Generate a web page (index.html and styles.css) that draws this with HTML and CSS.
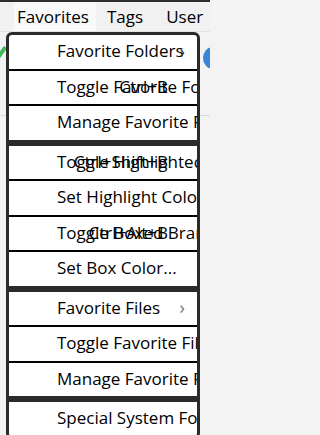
FILE: index.html
```html
<!DOCTYPE html>
<html>
<head>
<meta charset="utf-8">
<link rel="stylesheet" href="styles.css">
</head>
<body>
<div class="screen">
  <div class="topstrip"></div>
  <div class="menubar">
    <div class="mb-item mb-active">Favorites</div>
    <div class="mb-item mb-tags">Tags</div>
    <div class="mb-item mb-user">User</div>
  </div>
  <div class="content">
    <div class="green-mark"></div>
    <div class="blue-mark"></div>
    <div class="rule rule-1"></div>
  </div>

  <div class="popup">
    <div class="item"><span class="label">Favorite Folders</span><span class="arrow dark">&#8250;</span></div>
    <div class="sep"></div>
    <div class="item"><span class="label">Toggle Favorite Folder</span><span class="shortcut">Ctrl+B</span></div>
    <div class="sep"></div>
    <div class="item"><span class="label">Manage Favorite Folders</span></div>
    <div class="group-sep"></div>
    <div class="item"><span class="label">Toggle Highlighted</span><span class="shortcut">Ctrl+Shift+B</span></div>
    <div class="sep"></div>
    <div class="item"><span class="label">Set Highlight Color...</span></div>
    <div class="sep"></div>
    <div class="item"><span class="label">Toggle Boxed Branch</span><span class="shortcut">Ctrl+Alt+B</span></div>
    <div class="sep"></div>
    <div class="item"><span class="label">Set Box Color...</span></div>
    <div class="group-sep"></div>
    <div class="item"><span class="label">Favorite Files</span><span class="arrow">&#8250;</span></div>
    <div class="sep"></div>
    <div class="item"><span class="label">Toggle Favorite File</span></div>
    <div class="sep"></div>
    <div class="item"><span class="label">Manage Favorite Files</span></div>
    <div class="group-sep"></div>
    <div class="item"><span class="label">Special System Folders</span></div>
  </div>
</div>
</body>
</html>
```

FILE: styles.css
```css
html, body {
  margin: 0;
  padding: 0;
}
body {
  width: 210px;
  height: 435px;
  overflow: hidden;
  background: #f3f3f3;
  font-family: "Open Sans", "Noto Sans", "DejaVu Sans", sans-serif;
  font-size: 17px;
  color: #000;
}
.screen {
  position: relative;
  width: 210px;
  height: 435px;
  overflow: hidden;
}
.topstrip {
  height: 2px;
  background: #2d2d2d;
}
.menubar {
  height: 29px;
  display: flex;
  align-items: center;
  background: #f1f1f1;
  border-bottom: 1px solid #e2e2e2;
}
.mb-item {
  height: 29px;
  line-height: 29px;
  white-space: nowrap;
}
.mb-active {
  margin-left: 14px;
  padding: 0 12px 0 3px;
  width: 67px;
  background: #f9f9f9;
}
.mb-tags {
  margin-left: 11px;
}
.mb-user {
  margin-left: 23px;
}
.content {
  position: relative;
  height: 403px;
}
.green-mark {
  position: absolute;
  left: -4px;
  top: 18px;
  width: 12px;
  height: 4px;
  background: #3dbb5a;
  transform: rotate(-55deg);
}
.blue-mark {
  position: absolute;
  left: 203px;
  top: 15px;
  width: 20px;
  height: 22px;
  border-radius: 50%;
  background: #3a86d6;
}
.rule {
  position: absolute;
  left: 0;
  right: 0;
  height: 1px;
  background: #d9d9d9;
}
.rule-1 {
  top: 83px;
}

.popup {
  position: absolute;
  left: 6px;
  top: 32px;
  width: 188px;
  border: 3px solid #2b2b2b;
  border-radius: 6px;
  background: #2b2b2b;
  overflow: hidden;
}
.item {
  position: relative;
  height: 33.5px;
  background: #fff;
  display: flex;
  align-items: center;
  overflow: hidden;
}
.label {
  padding-left: 48px;
  white-space: nowrap;
  line-height: 1;
  position: relative;
  top: -1px;
}
.shortcut {
  position: absolute;
  right: 29px;
  top: 50%;
  transform: translateY(-55%);
  white-space: nowrap;
  line-height: 1;
}
.arrow {
  position: absolute;
  right: 12px;
  top: 50%;
  transform: translateY(-58%);
  font-size: 18px;
  line-height: 1;
  color: #777;
}
.arrow.dark {
  color: #333;
}
.sep {
  height: 2px;
  background: #000;
}
.group-sep {
  height: 6px;
  background: #2b2b2b;
}
```
